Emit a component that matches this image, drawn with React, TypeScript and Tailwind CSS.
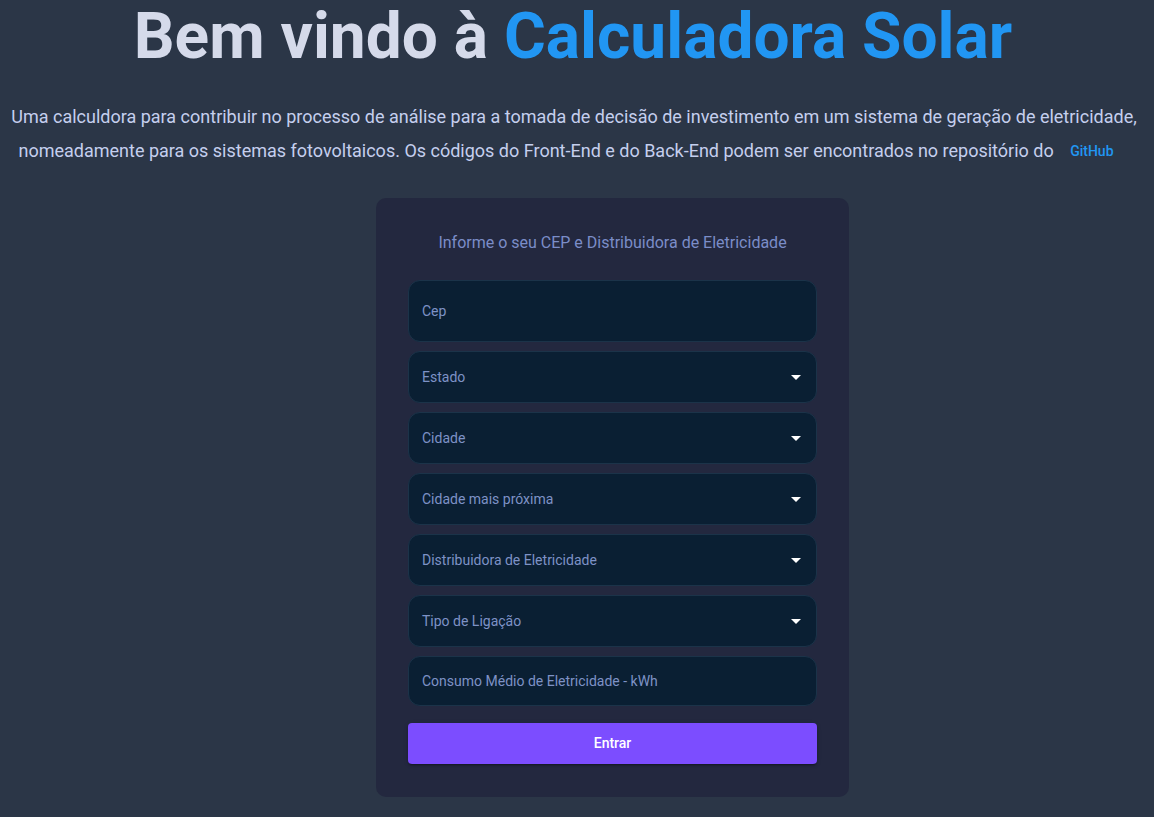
import React from "react";

const Arrow = () => (
  <svg width="24" height="24" viewBox="0 0 24 24" className="shrink-0" fill="#ffffff">
    <path d="M7 10l5 5 5-5z" />
  </svg>
);

function Field({ label, select, h }: { label: string; select?: boolean; h: string }) {
  return (
    <div
      className={`flex items-center justify-between rounded-[12px] border border-[#1b3349] bg-[#0a1f33] pl-[13px] pr-[8px] ${h}`}
    >
      <span className="text-[14px] text-[#7e92c6]">{label}</span>
      {select && <Arrow />}
    </div>
  );
}

export default function App() {
  return (
    <div
      className="min-h-[817px] w-full bg-[#2b3647] flex flex-col items-center"
      style={{ fontFamily: "Roboto, 'Liberation Sans', sans-serif" }}
    >
      <h1 className="text-[64px] font-bold leading-[72px] text-[#d5daea] pt-[1px] -ml-[8px]">
        Bem vindo à <span className="text-[#2196f3]">Calculadora Solar</span>
      </h1>
      <p className="mt-[27px] text-center text-[18px] leading-[34px] text-[#c5cfee] -ml-[6px]">
        Uma calculdora para contribuir no processo de análise para a tomada de decisão de investimento em um sistema de geração de eletricidade,
        <br />
        nomeadamente para os sistemas fotovoltaicos. Os códigos do Front-End e do Back-End podem ser encontrados no repositório do{" "}
        <span className="inline-block pl-[12px] pr-[16px] text-[14px] font-medium text-[#2196f3] leading-[34px] align-top">GitHub</span>
      </p>
      <div className="mt-[30px] ml-[71px] w-[473px] rounded-[10px] bg-[#23283f] px-[32px] pt-[35px] pb-[33px]">
        <div className="text-center text-[16px] text-[#7b8dc8] leading-[19px]">
          Informe o seu CEP e Distribuidora de Eletricidade
        </div>
        <div className="mt-[28px] flex flex-col gap-[9px]">
          <Field label="Cep" h="h-[62px]" />
          <Field label="Estado" select h="h-[52px]" />
          <Field label="Cidade" select h="h-[52px]" />
          <Field label="Cidade mais próxima" select h="h-[52px]" />
          <Field label="Distribuidora de Eletricidade" select h="h-[52px]" />
          <Field label="Tipo de Ligação" select h="h-[52px]" />
          <Field label="Consumo Médio de Eletricidade - kWh" h="h-[50px]" />
        </div>
        <button className="mt-[17px] h-[41px] w-full rounded-[4px] bg-[#7c4dff] text-[14px] font-medium text-white shadow-[0_3px_1px_-2px_rgba(0,0,0,0.2),0_2px_2px_0_rgba(0,0,0,0.14),0_1px_5px_0_rgba(0,0,0,0.12)]">
          Entrar
        </button>
      </div>
    </div>
  );
}
